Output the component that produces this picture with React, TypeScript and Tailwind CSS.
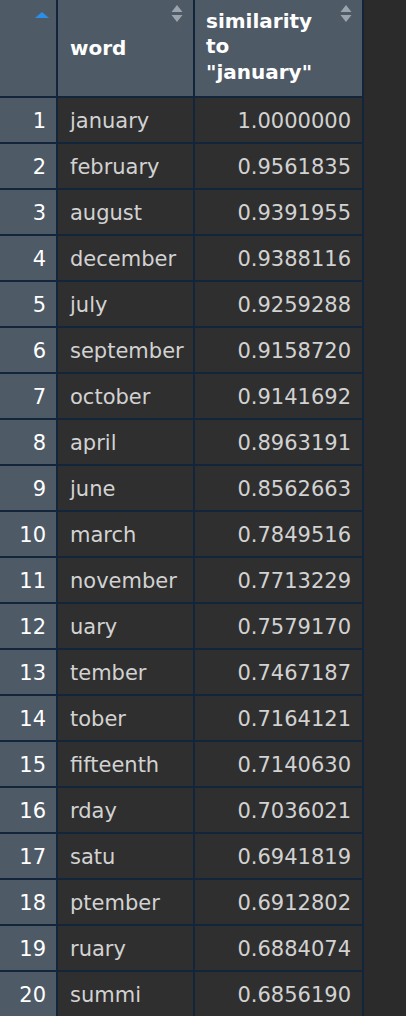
import React from "react";

const rows: [string, string][] = [
  ["january", "1.0000000"],
  ["february", "0.9561835"],
  ["august", "0.9391955"],
  ["december", "0.9388116"],
  ["july", "0.9259288"],
  ["september", "0.9158720"],
  ["october", "0.9141692"],
  ["april", "0.8963191"],
  ["june", "0.8562663"],
  ["march", "0.7849516"],
  ["november", "0.7713229"],
  ["uary", "0.7579170"],
  ["tember", "0.7467187"],
  ["tober", "0.7164121"],
  ["fifteenth", "0.7140630"],
  ["rday", "0.7036021"],
  ["satu", "0.6941819"],
  ["ptember", "0.6912802"],
  ["ruary", "0.6884074"],
  ["summi", "0.6856190"],
];

function SortBoth() {
  return (
    <svg width="12" height="18" viewBox="0 0 12 18" className="absolute right-[10px] top-[5px]">
      <path d="M6 0 L11.5 7 L0.5 7 Z" fill="#9ba4ad" />
      <path d="M0.5 10 L11.5 10 L6 17 Z" fill="#9ba4ad" />
    </svg>
  );
}

export default function App() {
  return (
    <div
      className="w-[406px] h-[1016px] overflow-hidden bg-[#2b2b2b]"
      style={{ fontFamily: '"DejaVu Sans", "Liberation Sans", sans-serif' }}
    >
      <div className="w-[364px] bg-[#13253a] pr-[2px] flex flex-col gap-[2px]">
        <div className="flex gap-[2px] h-[96px]">
          <div className="relative w-[56px] bg-[#4e5a65]">
            <svg width="14" height="6" viewBox="0 0 14 6" className="absolute left-[35px] top-[12px]">
              <path d="M7 0 L14 6 L0 6 Z" fill="#2a8fe6" />
            </svg>
          </div>
          <div className="relative w-[135px] bg-[#4e5a65] flex items-center pl-[12px]">
            <span className="text-[20px] font-bold text-white leading-[25px]">word</span>
            <SortBoth />
          </div>
          <div className="relative w-[167px] bg-[#4e5a65] flex items-center pl-[11px] pb-[2px]">
            <span className="text-[20px] font-bold text-white leading-[25.5px]">
              similarity
              <br />
              to
              <br />
              "january"
            </span>
            <SortBoth />
          </div>
        </div>
        {rows.map(([w, v], i) => (
          <div key={i} className="flex gap-[2px] h-[44px]">
            <div className="w-[56px] bg-[#4e5a65] flex items-center justify-end pr-[10px] pt-[3px] text-[21px] text-white">
              {i + 1}
            </div>
            <div className="w-[135px] bg-[#2f2f2f] flex items-center pl-[12px] pt-[3px] text-[21px] text-[#d2d2d2]">
              {w}
            </div>
            <div className="w-[167px] bg-[#2f2f2f] flex items-center justify-end pr-[11px] pt-[3px] text-[21px] text-[#d2d2d2]">
              {v}
            </div>
          </div>
        ))}
      </div>
    </div>
  );
}
